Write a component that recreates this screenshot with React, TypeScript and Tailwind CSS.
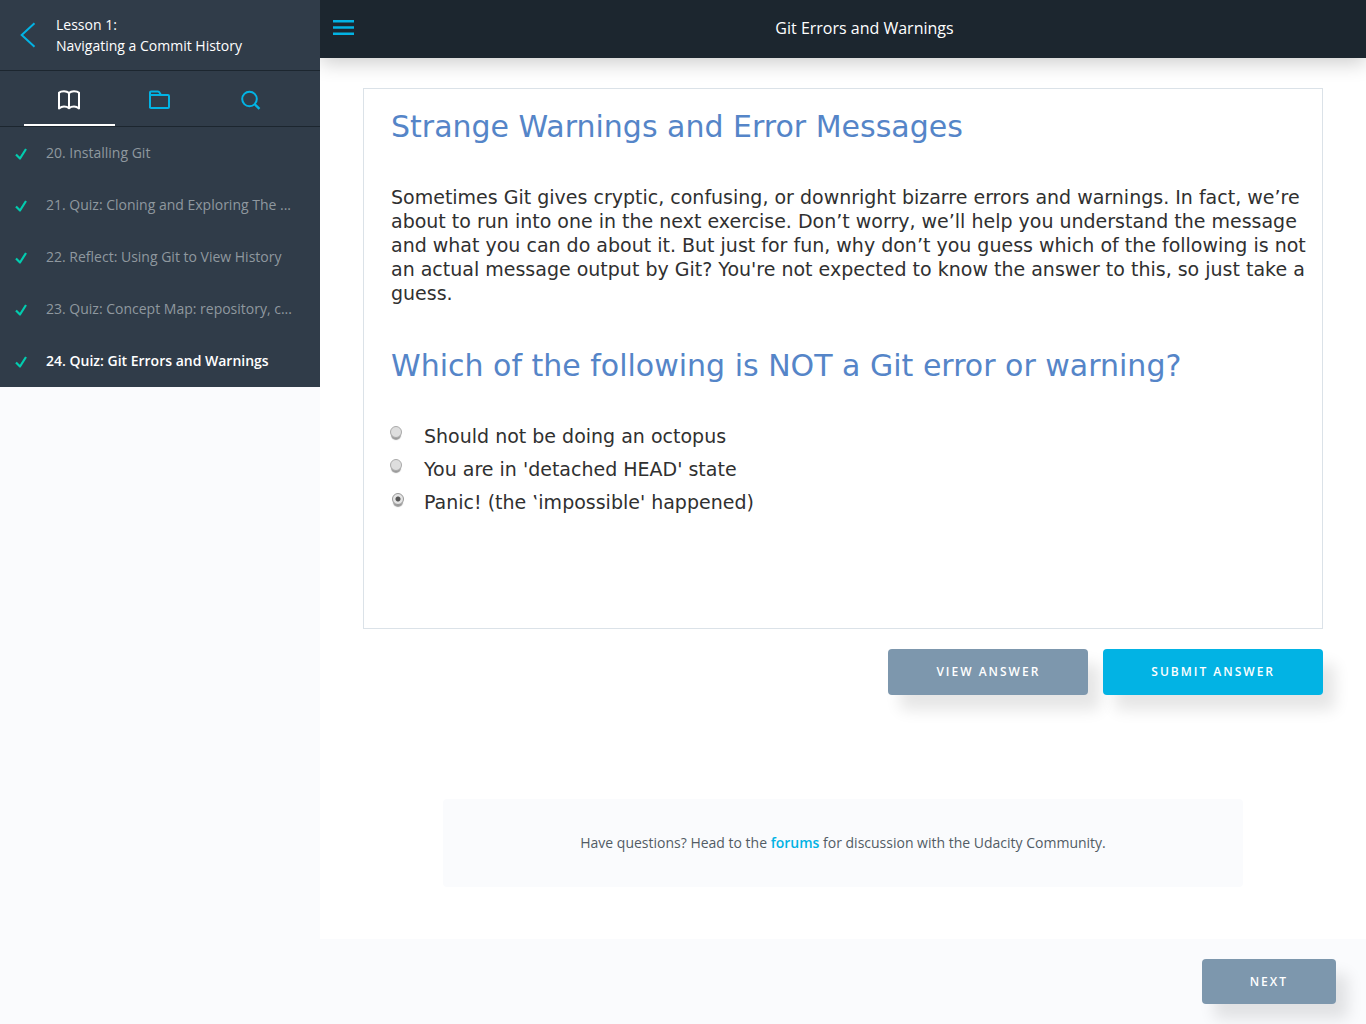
import { useState } from "react";

const lessons = [
  "20. Installing Git",
  "21. Quiz: Cloning and Exploring The ...",
  "22. Reflect: Using Git to View History",
  "23. Quiz: Concept Map: repository, c...",
  "24. Quiz: Git Errors and Warnings",
];

const options = [
  "Should not be doing an octopus",
  "You are in 'detached HEAD' state",
  "Panic! (the ‛impossible' happened)",
];

const buttonBase =
  "rounded px-12 text-xs font-semibold tracking-[2px] text-white shadow-[12px_15px_15px_rgba(0,0,0,0.1)]";

function Sidebar() {
  return (
    <aside className="w-80 shrink-0">
      <div className="bg-[#303c49]">
        <header className="flex h-[71px] items-center border-b border-[#1c262f] pl-5">
          <button type="button" aria-label="Back" className="mr-5 text-[#02b3e4]">
            <svg width="16" height="26" viewBox="0 0 16 26" fill="none" stroke="currentColor" strokeWidth="2">
              <path d="M14.5 1.2 1.700 13l12.800 11.800" />
            </svg>
          </button>
          <h2 className="text-sm leading-[21px] text-white">
            Lesson 1:
            <br />
            Navigating a Commit History
          </h2>
        </header>
        <nav className="flex h-14 border-b border-[#1c262f] px-6">
          <button
            type="button"
            aria-label="Lessons"
            className="flex w-[91px] items-center justify-center border-b-2 border-white pt-1 text-white"
          >
            <svg width="24" height="20" viewBox="0 0 24 20" fill="none" stroke="currentColor" strokeWidth="2" strokeLinecap="round" strokeLinejoin="round">
              <path d="M12 3C10.500 1.500 9 1.200 7 1.200S3.200 1.500 2 2.800V18.500C3.500 17.300 5 16.600 7 16.600S10.700 17.200 12 18.300C13.300 17.200 15 16.600 17 16.600S20.500 17.300 22 18.500V2.800C20.800 1.500 19 1.200 17 1.200S13.500 1.500 12 3ZM12 3V18" />
            </svg>
          </button>
          <button type="button" aria-label="Resources" className="flex w-[91px] items-center justify-center pt-0.5 text-[#02b3e4]">
            <svg width="22" height="20" viewBox="0 0 22 20" fill="none" stroke="currentColor" strokeWidth="2" strokeLinejoin="round">
              <path d="M1 18V2.500Q1 1.500 2 1.500H9Q10 1.500 10.500 2.500L12 5H19Q20 5 20 6V17Q20 18 19 18H2Q1 18 1 17M1 5H12" />
            </svg>
          </button>
          <button type="button" aria-label="Search" className="flex w-[91px] items-center justify-center pt-0.5 text-[#02b3e4]">
            <svg width="20" height="20" viewBox="0 0 20 20" fill="none" stroke="currentColor" strokeWidth="2">
              <circle cx="8.500" cy="9" r="7.300" />
              <path d="m13.500 14 5 4.800" strokeWidth="2.400" />
            </svg>
          </button>
        </nav>
        <ul>
          {lessons.map((lesson, i) => (
            <li key={lesson}>
              <a
                href="#"
                className={
                  i === 4
                    ? "flex h-[52px] items-center pl-[15px] text-sm font-semibold text-white"
                    : "flex h-[52px] items-center pl-[15px] text-sm text-[#8f989f]"
                }
              >
                <svg className="mr-[19px] mt-0.5 shrink-0" width="12" height="12" viewBox="0 0 12 12" fill="none" stroke="#02ccaf" strokeWidth="2.2">
                  <path d="m1 6.500 4 4L11 1" strokeLinejoin="round" />
                </svg>
                <span className="whitespace-nowrap">{lesson}</span>
              </a>
            </li>
          ))}
        </ul>
      </div>
    </aside>
  );
}

function Quiz() {
  const [selected, setSelected] = useState(2);
  return (
    <section className="min-h-[541px] border border-[#dbe2e8] px-[27px] font-['DejaVu_Sans',sans-serif]">
      <h2 className="pt-[18px] text-[30px] leading-10 text-[#5585c8]">Strange Warnings and Error Messages</h2>
      <p className="-mr-4 mt-[38px] text-[19px] leading-6 text-[#303030]">
        Sometimes Git gives cryptic, confusing, or downright bizarre errors and warnings. In fact, we’re about to run
        into one in the next exercise. Don’t worry, we’ll help you understand the message and what you can do about
        it. But just for fun, why don’t you guess which of the following is not an actual message output by Git?
        You're not expected to know the answer to this, so just take a guess.
      </p>
      <fieldset>
        <legend className="pt-[41px] text-[30px] leading-10 text-[#5585c8]">
          Which of the following is NOT a Git error or warning?
        </legend>
        <div className="mt-[33px]">
          {options.map((option, i) => (
            <label key={option} className="flex h-[33px] items-center text-[19px] leading-6 text-[#303030]">
              <input
                type="radio"
                name="answer"
                checked={selected === i}
                onChange={() => setSelected(i)}
                className={
                  i === 2
                    ? "mb-1.5 ml-px mr-5 size-3 shrink-0 appearance-none rounded-full border border-[#999] bg-[#e4e4e4] shadow-[0_3px_1px_-1px_#999] checked:bg-[radial-gradient(circle,#555_0_2px,#e4e4e4_3px)]"
                    : "mb-2 -ml-px mr-[22px] size-3 shrink-0 appearance-none rounded-full border border-[#aaa] bg-[#dedede] shadow-[0_3px_1px_-1px_#999] checked:bg-[radial-gradient(circle,#555_0_2px,#e4e4e4_3px)]"
                }
              />
              {option}
            </label>
          ))}
        </div>
      </fieldset>
    </section>
  );
}

export default function App() {
  return (
    <div className="flex min-h-screen bg-[#fafbfd] font-['Open_Sans',sans-serif]">
      <Sidebar />
      <div className="flex min-w-0 flex-1 flex-col">
        <header className="z-10 flex h-[58px] items-center bg-[#1c262f] pl-[13px] shadow-[0_5px_20px_rgba(0,0,0,0.2)] [clip-path:inset(0_0_-40px_0)]">
          <button type="button" aria-label="Menu" className="pb-0.5 text-[#02b3e4]">
            <svg width="22" height="16" viewBox="0 0 22 16" stroke="currentColor" strokeWidth="2.400">
              <path d="M0 1.200h21M0 7.500h21M0 13.700h21" />
            </svg>
          </button>
          <h1 className="flex-1 pl-2 pb-0.5 text-center text-base text-white">Git Errors and Warnings</h1>
        </header>
        <main className="flex-1 bg-white px-[43px] pt-[30px]">
          <Quiz />
          <div className="mt-5 flex justify-end gap-[15px]">
            <button type="button" className={`${buttonBase} h-[46px] bg-[#7d97ad]`}>
              VIEW ANSWER
            </button>
            <button type="button" className={`${buttonBase} h-[46px] bg-[#02b3e4]`}>
              SUBMIT ANSWER
            </button>
          </div>
          <p className="mx-auto mt-[104px] max-w-[800px] rounded bg-[#fafbfd] py-8 text-center text-sm leading-6 text-[#525c65]">
            Have questions? Head to the{" "}
            <a href="#" className="font-semibold text-[#02b3e4]">
              forums
            </a>{" "}
            for discussion with the Udacity Community.
          </p>
        </main>
        <footer className="flex h-[85px] justify-end overflow-hidden pr-[30px] pt-5">
          <button type="button" className={`${buttonBase} h-[45px] bg-[#7d97ad]`}>
            NEXT
          </button>
        </footer>
      </div>
    </div>
  );
}
